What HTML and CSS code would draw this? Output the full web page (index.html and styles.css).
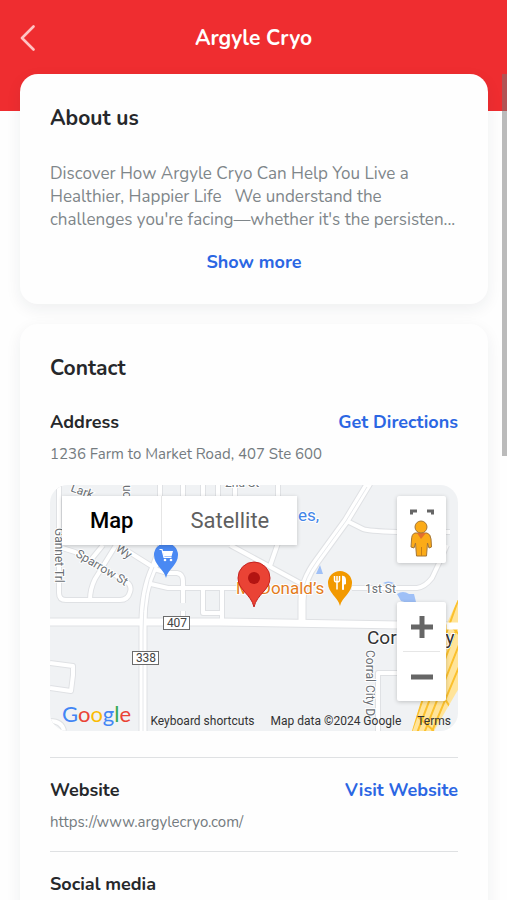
FILE: index.html
```html
<!DOCTYPE html>
<html lang="en">
<head>
  <meta charset="UTF-8" />
  <meta name="viewport" content="width=device-width, initial-scale=1.0" />
  <title>Argyle Cryo</title>
  <link rel="stylesheet" href="styles.css">
</head>
<body>
  <div class="app">
    <header class="topbar">
      <button type="button" class="back-btn" aria-label="Back">
        <svg width="16" height="26" viewBox="0 0 16 26"><path d="M13.500 1.500 2 13l11.500 11.500" fill="none" stroke="#ffc4c4" stroke-width="2.600" stroke-linecap="round" stroke-linejoin="round"/></svg>
      </button>
      <h1>Argyle Cryo</h1>
    </header>

    <main class="content">
      <section class="card">
        <h2>About us</h2>
        <p class="about-text">Discover How Argyle Cryo Can Help You Live a Healthier, Happier Life &nbsp; We understand the challenges you're facing—whether it's the persisten...</p>
        <button type="button" class="show-more">Show more</button>
      </section>

      <section class="card">
        <h2>Contact</h2>

        <div class="block">
          <div class="block-head">
            <h3>Address</h3>
            <a href="#directions">Get Directions</a>
          </div>
          <p class="block-text">1236 Farm to Market Road, 407 Ste 600</p>

          <div class="map">
            <svg class="map-canvas" viewBox="0 0 408 246" preserveAspectRatio="xMidYMid slice" role="img" aria-label="Map of the area">
              <defs>
                <g id="roads">
                  <path d="M9 0V108Q9 115 16 115H70Q78 115 80 107Q82 101 77 97L25 67L9 62"/>
                  <path d="M40 115Q40 104 45 94L66 60M53 60 40 76"/>
                  <path d="M60 55 103 82M101 99 118 103H190M104 84 118 88H127Q133 89 133 96V118M133 126V137"/>
                  <path d="M153 104V128H172M172 104V137"/>
                  <path d="M180 60 250 98M220 81 228 58V0M110 0V12M133 0V12M153 0V12M168 0V12M185 0V12"/>
                  <path d="M297 36 313 44Q317 46 347 47H400M302 103H367Q375 102 382 93L390 76L397 60"/>
                  <path d="M328 246V188H360M0 178 23 181V190L21 206L0 203M0 236Q12 236 14 246"/>
                </g>
                <g id="main-roads">
                  <path d="M0 137H170L408 141"/>
                  <path d="M93 246V138Q93 105 104 82L112 60"/>
                  <path d="M319 -2 296 36 267 76Q252 96 252 116V139"/>
                </g>
                <clipPath id="strip"><path d="M412 106 390 153 362 246H384L412 198Z"/></clipPath>
              </defs>
              <rect width="408" height="246" fill="#f0f2f4"/>
              <path d="M270 80 266 89H273ZM333 98Q338 95 344 98L342 101ZM347 109Q353 105 359 109L364 109L366 117Q358 119 351 116Z" fill="#9fc0f7"/>
              <g fill="none" stroke-linejoin="round">
                <use href="#roads" stroke="#dfe1e4" stroke-width="6"/>
                <use href="#main-roads" stroke="#dfe1e4" stroke-width="9"/>
                <use href="#roads" stroke="#fff" stroke-width="4"/>
                <use href="#main-roads" stroke="#fff" stroke-width="7"/>
                <path d="M93 246V146Q93 105 104 82M317 2 296 36 267 76Q254 94 253 108" stroke="#e6e8eb"/>
              </g>
              <g clip-path="url(#strip)">
                <rect x="355" y="100" width="60" height="150" fill="#ffe49a"/>
                <path d="M412 104 358 256M418 114 364 256M420 132 371 256M424 146 378 256M430 160 386 256M400 140 424 165M380 190 400 222M366 230 384 246" stroke="#fbc02d" stroke-width="2" fill="none"/>
              </g>
              <path d="M397 141H408" stroke="#fff" stroke-width="7"/>

              <g class="street-name">
                <text x="175" y="2">2nd St</text>
                <text transform="translate(20 6) rotate(20)">Lark</text>
                <text transform="translate(73 0) rotate(90)">uc</text>
                <text transform="translate(65 65) rotate(35)">Wy</text>
                <text transform="translate(25 71) rotate(31)">Sparrow St</text>
                <text transform="translate(5 43) rotate(90)">Gannet Trl</text>
                <text transform="translate(316 165) rotate(90)">Corral City D</text>
                <text x="315" y="108">1st St</text>
              </g>
              <text class="poi poi-shop" x="248" y="36">es,</text>
              <text class="poi poi-food" x="186" y="109">McDonald’s</text>
              <text class="city" x="317" y="159">Corral City</text>

              <g class="shield">
                <rect x="113.500" y="131.500" width="26" height="13"/>
                <text x="127" y="142">407</text>
                <rect x="82.500" y="166.500" width="26" height="13"/>
                <text x="96" y="177">338</text>
              </g>

              <!-- shop pin -->
              <path d="M116 93C114 84 104 80 104 70A12 12 0 0 1 128 70C128 80 118 84 116 93Z" fill="#4a89f3"/>
              <path d="M109.500 64.500H112L114 72.500H121.500" fill="none" stroke="#fff" stroke-width="1.200"/>
              <path d="M112.500 66H123L121.500 71.500H114Z" fill="#fff"/>
              <circle cx="115" cy="75" r="1.300" fill="#fff"/><circle cx="121" cy="75" r="1.300" fill="#fff"/>
              <!-- food pin -->
              <path d="M290 121C288 112 278 108 278 98A12 12 0 0 1 302 98C302 108 292 112 290 121Z" fill="#f29900"/>
              <path d="M284.500 91V95Q284.500 97 287 97Q289.500 97 289.500 95V91M287 91V104.500" fill="none" stroke="#fff" stroke-width="1.500"/>
              <path d="M292.500 104.500V91Q295.500 91 295.500 95V99H293.500V104.500Z" fill="#fff" stroke="#fff"/>
              <!-- business marker -->
              <path d="M204 122C201 109 188 105 188 93A16 16 0 0 1 220 93C220 105 207 109 204 122Z" fill="#ea4335" stroke="#c5221f"/>
              <circle cx="204" cy="93" r="6" fill="#b31412"/>
            </svg>

            <div class="map-type">
              <button type="button" class="active">Map</button>
              <button type="button">Satellite</button>
            </div>

            <button type="button" class="map-control street-view" aria-label="Street View">
              <svg width="49" height="67" viewBox="0 0 49 67">
                <path d="M14.500 18.500V15H20M30 15H35.500V18.500" fill="none" stroke="#666" stroke-width="3"/>
                <path d="M18 37Q14.500 38 14.500 44L14 51L17 52L18.500 47L19.500 60H29.500L30.500 47L32 52L34.500 51L34 43Q33.500 38 30 37Z" fill="#fbab18" stroke="#a47535" stroke-linejoin="round"/>
                <path d="M20 37 24 43 29 37Z" fill="#e3702d"/>
                <path d="M24.500 51V60" stroke="#c77f16"/>
                <circle cx="24" cy="31" r="6" fill="#fbab18" stroke="#a47535"/>
              </svg>
            </button>

            <div class="map-control zoom">
              <button type="button" aria-label="Zoom in">
                <svg width="22" height="22" viewBox="0 0 22 22"><path d="M11 0V22M0 11H22" stroke="#666" stroke-width="5"/></svg>
              </button>
              <button type="button" aria-label="Zoom out">
                <svg width="22" height="22" viewBox="0 0 22 22"><path d="M0 11H22" stroke="#666" stroke-width="5"/></svg>
              </button>
            </div>

            <div class="map-footer">
              <a href="#google" class="google-logo"><span class="g-blue">G</span><span class="g-red">o</span><span class="g-yellow">o</span><span class="g-blue">g</span><span class="g-green">l</span><span class="g-red">e</span></a>
              <div class="map-legal">
                <button type="button">Keyboard shortcuts</button>
                <span>Map data ©2024 Google</span>
                <a href="#terms">Terms</a>
              </div>
            </div>
          </div>
        </div>

        <div class="block">
          <div class="block-head">
            <h3>Website</h3>
            <a href="#website">Visit Website</a>
          </div>
          <p class="block-text">https://www.argylecryo.com/</p>
        </div>

        <div class="block">
          <div class="block-head">
            <h3>Social media</h3>
          </div>
        </div>
      </section>
    </main>
    <div class="scroll-thumb"></div>
  </div>
</body>
</html>
```
FILE: styles.css
```css
* {
  box-sizing: border-box;
}
body {
  margin: 0;
  font-family: Nunito, Lato, sans-serif;
  color: #26282b;
  background: #fefefe;
}
h1, h2, h3, p {
  margin: 0;
}
button {
  padding: 0;
  border: none;
  background: none;
  font-family: inherit;
  cursor: pointer;
}
a {
  text-decoration: none;
}
svg {
  display: block;
}
.app {
  position: relative;
  height: 100vh;
  overflow: hidden;
  background: linear-gradient(#ef2d30 111px, #fefefe 111px);
}
.topbar {
  display: grid;
  grid-template-columns: 40px 1fr 40px;
  align-items: center;
  height: 74px;
  padding: 2px 20px 0;
}
.topbar h1 {
  font-size: 21px;
  line-height: 28px;
  font-weight: 700;
  text-align: center;
  color: #fff;
}
.content {
  display: flex;
  flex-direction: column;
  gap: 20px;
  padding: 0 19px 20px 20px;
}
.card {
  padding: 30px;
  border-radius: 18px;
  background: #fefefe;
  box-shadow: 0 5px 16px rgba(30, 40, 60, 0.07);
}
.card h2 {
  margin-bottom: 28px;
  font-size: 21px;
  line-height: 28px;
  font-weight: 700;
}
.about-text {
  margin-top: 30px;
  font-size: 17px;
  line-height: 23px;
  color: #7f868a;
}
.show-more {
  display: block;
  margin: 19px auto 0;
  font-size: 18px;
  line-height: 24px;
  font-weight: 700;
  color: #2b66e3;
}
.block + .block {
  margin-top: 19px;
  padding-top: 20px;
  border-top: 1px solid #dfe1e3;
}
.block-head {
  display: flex;
  justify-content: space-between;
  font-size: 18px;
  line-height: 24px;
  font-weight: 700;
}
.block-head h3 {
  font-size: inherit;
}
.block-head a {
  color: #2b66e3;
}
.block-text {
  margin-top: 10px;
  font-size: 15px;
  line-height: 20px;
  color: #747b80;
}

/* map */
.map {
  position: relative;
  height: 246px;
  margin: 21px 0 26px;
  border-radius: 18px;
  overflow: hidden;
  font-family: Roboto, sans-serif;
}
.map-canvas {
  width: 100%;
  height: 100%;
}
.map-canvas text {
  paint-order: stroke;
  stroke: #fff;
  stroke-width: 2px;
}
.street-name {
  font-size: 12px;
  fill: #6b7075;
}
.poi {
  font-size: 17px;
}
.poi-shop {
  fill: #4285e8;
}
.poi-food {
  fill: #e37b1c;
}
.city {
  font-size: 19px;
  fill: #333;
}
.shield {
  font-size: 12px;
  text-anchor: middle;
}
.shield rect {
  fill: #fff;
  stroke: #6c6c6c;
}
.shield text {
  fill: #444;
}
.map-type {
  position: absolute;
  top: 11px;
  left: 12px;
  display: flex;
  background: #fff;
  box-shadow: 0 1px 4px rgba(0, 0, 0, 0.2);
}
.map-type button {
  padding: 0 28px;
  font-size: 22px;
  line-height: 49px;
  color: #5f5f5f;
}
.map-type .active {
  border-right: 1px solid #e6e6e6;
  font-weight: 500;
  color: #000;
}
.map-control {
  position: absolute;
  right: 12px;
  width: 49px;
  border-radius: 2px;
  background: #fff;
  box-shadow: 0 1px 4px rgba(0, 0, 0, 0.2);
}
.street-view {
  top: 11px;
}
.zoom {
  bottom: 30px;
  padding: 0 6px;
}
.zoom button {
  display: flex;
  align-items: center;
  justify-content: center;
  width: 100%;
  height: 49px;
}
.zoom button + button {
  border-top: 1px solid #e6e6e6;
  height: 50px;
}
.map-footer {
  position: absolute;
  right: 0;
  bottom: 0;
  left: 0;
  display: flex;
  align-items: flex-end;
  justify-content: space-between;
  padding: 0 7px 0 12px;
}
.google-logo {
  font-family: Lato, sans-serif;
  font-size: 22px;
  line-height: 34px;
}
.g-blue {
  color: #4285f4;
}
.g-red {
  color: #ea4335;
}
.g-yellow {
  color: #fbbc05;
}
.g-green {
  color: #34a853;
}
.map-legal {
  display: flex;
  gap: 16px;
  font-size: 12px;
  line-height: 20px;
  color: #333;
}
.map-legal button,
.map-legal a {
  font-size: 12px;
  color: #333;
}
.scroll-thumb {
  position: absolute;
  top: 74px;
  right: 0;
  width: 5px;
  height: 382px;
  background: rgba(120, 120, 120, 0.5);
}
```
